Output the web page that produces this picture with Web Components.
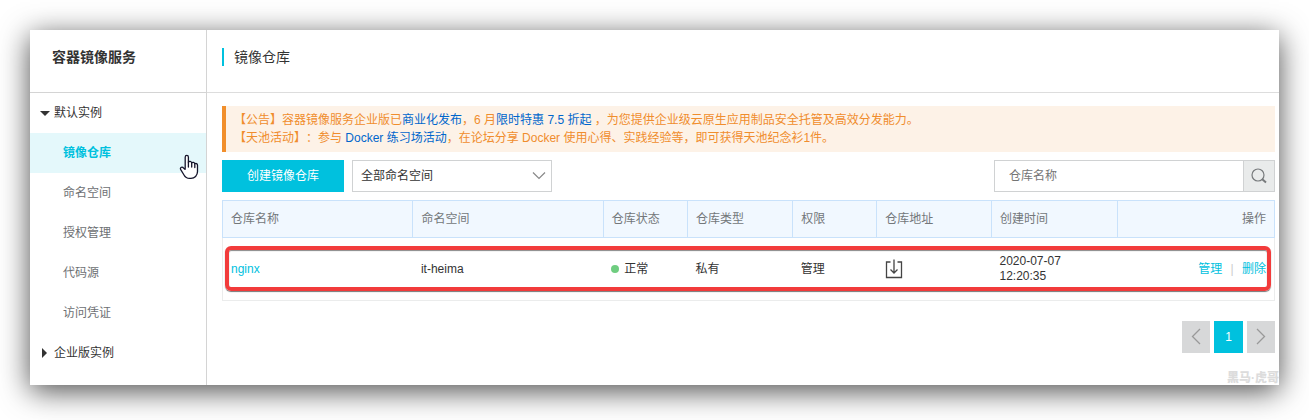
<!DOCTYPE html>
<html lang="zh-CN">
<head>
<meta charset="utf-8">
<title>容器镜像服务</title>
<style>
  body {
    margin: 0;
    padding: 30px 30px 35px;
    background: #fff;
    color: #333;
    font: 12px/18px "Liberation Sans", "Noto Sans CJK SC", sans-serif;
    text-spacing-trim: space-all;
    --accent: #00c1de;
  }
</style>
</head>
<body>
<registry-app>
  <side-nav slot="nav" heading="容器镜像服务">
    <nav-group label="默认实例" open>
      <nav-item active>镜像仓库</nav-item>
      <nav-item>命名空间</nav-item>
      <nav-item>授权管理</nav-item>
      <nav-item>代码源</nav-item>
      <nav-item>访问凭证</nav-item>
    </nav-group>
    <nav-group label="企业版实例"></nav-group>
  </side-nav>
  <page-title slot="title">镜像仓库</page-title>
  <notice-bar></notice-bar>
  <repo-toolbar></repo-toolbar>
  <repo-table></repo-table>
  <page-switch></page-switch>
</registry-app>

<script>
const define = (name, html, setup) => customElements.define(name, class extends HTMLElement {
  constructor() {
    super();
    this.attachShadow({ mode: 'open' }).innerHTML = html;
  }
  connectedCallback() {
    if (setup) setup(this, this.shadowRoot);
  }
});

define('registry-app', `
  <style>
    :host { display: flex; position: relative; background: #fff; box-shadow: 0 6px 28px rgba(0,0,0,.7); }
    main { flex: 1; min-width: 0; }
    .body { display: flex; flex-direction: column; gap: 8px; padding: 13px 4px 0 15px; }
    .mark { position: absolute; right: 0; bottom: 0; font-weight: 900; line-height: 14px; color: #dcdcdc; }
  </style>
  <slot name="nav"></slot>
  <main>
    <slot name="title"></slot>
    <div class="body"><slot></slot></div>
  </main>
  <span class="mark">黑马·虎哥</span>`);

define('side-nav', `
  <style>
    :host { display: block; position: relative; box-sizing: border-box; width: 177px; flex: none; border-right: 1px solid #d4d4d4; padding-bottom: 12px; }
    h1 { margin: 0; padding: 18px 22px 26px; font-size: 14px; line-height: 18px; border-bottom: 1px solid #d4d4d4; }
    svg { position: absolute; left: 149px; top: 124px; }
  </style>
  <h1></h1>
  <nav><slot></slot></nav>
  <svg width="20" height="26" viewBox="0 0 20 26" fill="#fff" stroke="#15152b" stroke-width="1.3" stroke-linejoin="round" stroke-linecap="round" aria-hidden="true">
    <path d="M6.2 14.5V3.2C6.2 .8 9.4 .8 9.4 3.2V8.2C10 7 12.4 7 12.7 9C13.4 7.900 15.600 8.200 15.800 9.900C16.700 9 18.500 9.500 18.500 11.300V17.500C18.500 21.500 15.600 24.400 12 24.400H10.500C8 24.400 6.300 23.300 5 21L1.600 15.400C.8 13.700 2.600 12.500 3.900 13.400L6.200 15.400"/>
    <path d="M9.400 8.200V13M12.700 9V13M15.800 10V13.500" fill="none"/>
  </svg>`,
  (el, root) => { root.querySelector('h1').textContent = el.getAttribute('heading'); });

define('nav-group', `
  <style>
    :host { display: block; }
    button { display: flex; align-items: center; gap: 5px; width: 100%; height: 40px; padding: 0 10px; border: 0; background: none; font: inherit; color: #333; text-align: left; }
    i { width: 9px; display: flex; justify-content: center; }
    i::before { content: ""; border: 5px solid transparent; border-left-color: #333; border-right-width: 0; }
    :host([open]) i::before { border: 5px solid transparent; border-top-color: #333; border-bottom-width: 0; }
  </style>
  <button type="button"><i></i><span></span></button>
  <slot></slot>`,
  (el, root) => {
    root.querySelector('span').textContent = el.getAttribute('label');
    root.querySelector('button').setAttribute('aria-expanded', el.hasAttribute('open'));
  });

define('nav-item', `
  <style>
    :host { display: block; }
    a { display: block; padding: 0 33px; line-height: 40px; color: #6d7073; text-decoration: none; }
    :host([active]) a { background: #e4f8fb; color: var(--accent); font-weight: 700; }
  </style>
  <a href="#"><slot></slot></a>`);

define('page-title', `
  <style>
    :host { display: block; padding: 18px 15px 26px; border-bottom: 1px solid #ddd; }
    h2 { margin: 0; padding-left: 10px; border-left: 2px solid var(--accent); font-size: 14px; font-weight: 400; line-height: 18px; }
  </style>
  <h2><slot></slot></h2>`);

define('notice-bar', `
  <style>
    :host { display: block; padding: 5px 8px; border-left: 4px solid #f18f2c; background: #fdf2e7; color: #f08d2d; }
    p { margin: 0; }
    a { color: #06c; text-decoration: none; }
  </style>
  <p>【公告】容器镜像服务企业版已<a href="#">商业化发布</a>，6 月<a href="#">限时特惠 7.5 折起</a> ，为您提供企业级云原生应用制品安全托管及高效分发能力。</p>
  <p>【天池活动】：参与 <a href="#">Docker 练习场活动</a>，在论坛分享 Docker 使用心得、实践经验等，即可获得天池纪念衫1件。</p>`);

define('repo-toolbar', `
  <style>
    :host { display: flex; gap: 8px; height: 32px; }
    button, select, input { box-sizing: border-box; margin: 0; font: inherit; border-radius: 0; }
    .create { width: 122px; border: 0; background: var(--accent); color: #fff; }
    .pick { display: grid; width: 200px; }
    .pick > * { grid-area: 1 / 1; }
    select { appearance: none; border: 1px solid #d0d2d3; background: #fff; color: #333; padding: 0 8px; }
    .pick svg { place-self: center end; margin-right: 6px; pointer-events: none; }
    form { display: flex; width: 281px; margin-left: auto; }
    input { flex: 1; min-width: 0; border: 1px solid #d0d2d3; border-right: 0; padding: 0 14px; }
    input::placeholder { color: #757575; opacity: 1; }
    form button { display: grid; place-items: center; width: 32px; padding: 0; border: 1px solid #d0d2d3; background: #e9ebeb; }
  </style>
  <button class="create" type="button">创建镜像仓库</button>
  <label class="pick">
    <select aria-label="命名空间"><option>全部命名空间</option></select>
    <svg width="14" height="10" fill="none" stroke="#888" stroke-width="1.200"><path d="M1 1.500l6 6 6-6"/></svg>
  </label>
  <form>
    <input type="search" placeholder="仓库名称" aria-label="仓库名称">
    <button type="button" aria-label="搜索">
      <svg width="16" height="16" fill="none" stroke="#777a7c"><circle cx="7" cy="7" r="6" stroke-width="1.200"/><path d="M11 11l4 3.500" stroke-width="2"/></svg>
    </button>
  </form>`);

define('repo-table', `
  <style>
    :host { display: block; position: relative; }
    table { width: 100%; table-layout: fixed; border-collapse: collapse; }
    th, td { padding: 0 8px; text-align: left; font-weight: 400; }
    th { height: 36px; border: 1px solid #c9e2fb; background: #f1f8ff; color: #73777a; }
    td { height: 62px; border-bottom: 1px solid #ebecec; }
    td:first-child { border-left: 1px solid #ebecec; }
    td:last-child { border-right: 1px solid #ebecec; }
    th:last-child, td:last-child { text-align: right; }
    a { color: var(--accent); text-decoration: none; }
    time { display: block; line-height: 15px; }
    .state { display: flex; align-items: center; gap: 5px; }
    .state::before { content: ""; width: 8px; height: 8px; border-radius: 50%; background: #6fcd80; }
    .sep { margin: 0 5px; color: #ccc; }
    svg { display: block; }
    .focus { position: absolute; left: 3px; right: 4px; bottom: 10px; height: 37px; border: 4px solid #f23b3b; border-radius: 6px; box-shadow: 0 1px 1px #777, inset 0 1px 1px #888; pointer-events: none; }
  </style>
  <table>
    <colgroup><col style="width:18.1%"><col style="width:18.1%"><col style="width:8%"><col style="width:10%"><col style="width:8%"><col style="width:10.9%"><col style="width:12%"><col style="width:14.9%"></colgroup>
    <thead><tr><th>仓库名称</th><th>命名空间</th><th>仓库状态</th><th>仓库类型</th><th>权限</th><th>仓库地址</th><th>创建时间</th><th>操作</th></tr></thead>
    <tbody><tr>
      <td><a href="#">nginx</a></td>
      <td>it-heima</td>
      <td><span class="state">正常</span></td>
      <td>私有</td>
      <td>管理</td>
      <td><svg width="18" height="20" fill="none" stroke="#444" stroke-width="1.300"><path d="M5.500 3H1.500v15.500h15V3h-4M9 .5v13M5.500 10.500L9 14l3.500-3.500"/></svg></td>
      <td><time datetime="2020-07-07T12:20:35">2020-07-07<br>12:20:35</time></td>
      <td><a href="#">管理</a> <span class="sep">|</span> <a href="#">删除</a></td>
    </tr></tbody>
  </table>
  <div class="focus"></div>`);

define('page-switch', `
  <style>
    :host { display: flex; justify-content: flex-end; gap: 4px; padding-top: 12px; }
    button { display: grid; place-items: center; width: 28px; height: 32px; padding: 0; border: 0; background: #d7d8d9; font: inherit; }
    .on { width: 29px; background: var(--accent); color: #fff; }
  </style>
  <button type="button" aria-label="上一页"><svg width="10" height="18" fill="none" stroke="#999" stroke-width="1.300"><path d="M9 1L1.500 8.500 9 16"/></svg></button>
  <button type="button" class="on" aria-current="page">1</button>
  <button type="button" aria-label="下一页"><svg width="10" height="18" fill="none" stroke="#999" stroke-width="1.300"><path d="M1 1l7.500 7.500L1 16"/></svg></button>`);
</script>
</body>
</html>
